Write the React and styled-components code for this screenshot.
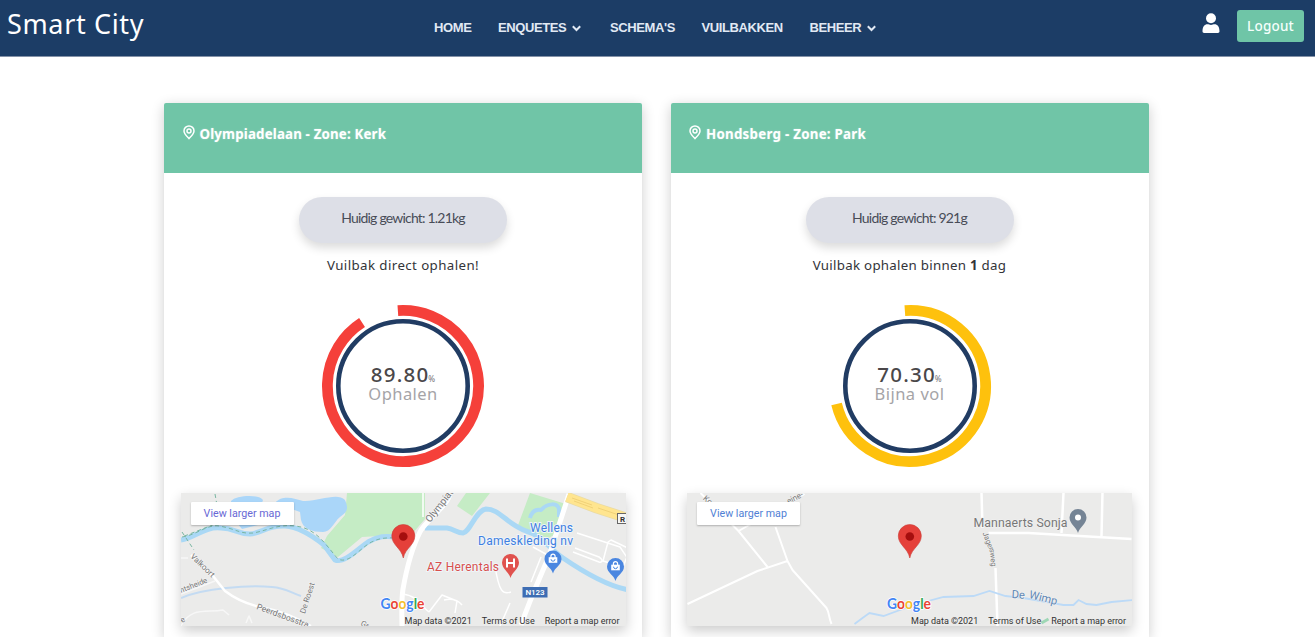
import React from 'react';
import styled, { createGlobalStyle } from 'styled-components';

const GlobalStyle = createGlobalStyle`
  * { box-sizing: border-box; }
  html, body { margin: 0; height: 637px; overflow: hidden; background: #fff; }
  body { font-family: "Noto Sans", "Open Sans", sans-serif; color: #3a3b40; }
`;

const Header = styled.header`
  height: 57px;
  display: grid;
  grid-template-columns: 434px 1fr auto;
  background: #1c3d66;
  border-bottom: 1px solid #8492a8;
  color: #fff;
`;

const Brand = styled.div`
  padding: 5px 0 0 7px;
  font-size: 27px;
  line-height: 37px;
  letter-spacing: 0.65px;
  white-space: nowrap;
`;

const Nav = styled.nav`
  display: flex;
  padding-top: 20px;
`;

const NavItem = styled.a`
  display: flex;
  align-items: center;
  height: 16px;
  width: ${(p) => p.$width}px;
  font: bold 13px/16px "Liberation Sans", Arial, sans-serif;
  letter-spacing: -0.4px;
  color: #e1e9f4;
  white-space: nowrap;
  svg { margin-left: 6px; flex: none; }
`;

const Account = styled.div`
  display: flex;
  align-items: flex-start;
  padding: 9.5px 11px 0 0;
  gap: 17px;
  > svg { margin-top: 2px; }
`;

const LogoutButton = styled.button`
  width: 67px;
  height: 32px;
  padding: 0;
  border: 0;
  border-radius: 3px;
  background: #6fc5a7;
  color: #f4fffb;
  font: 500 13.5px "Noto Sans", sans-serif;
  letter-spacing: 0.2px;
`;

const Main = styled.main`
  display: flex;
  gap: 28.5px;
  height: 580px;
  padding: 46px 0 0 164px;
  overflow: hidden;
`;

const Card = styled.article`
  width: 478px;
  height: 534px;
  flex: none;
  display: flex;
  flex-direction: column;
  align-items: center;
  border-radius: 2px 2px 0 0;
  background: #fff;
  box-shadow: 0 3px 13px rgba(0, 0, 0, 0.2);
`;

const CardHeader = styled.h2`
  align-self: stretch;
  display: flex;
  align-items: flex-start;
  gap: 5px;
  height: 70px;
  margin: 0;
  padding: 21px 0 0 18.5px;
  border-radius: 2px 2px 0 0;
  background: #70c5a7;
  color: #fff;
  font-size: 13.3px;
  font-weight: 700;
  line-height: 20px;
  letter-spacing: ${(p) => p.$spacing}px;
  text-shadow: 0 0 2px rgba(255, 255, 255, 0.35);
  svg { flex: none; margin-top: 1px; }
`;

const Weight = styled.div`
  width: 208px;
  height: 46px;
  margin-top: 24px;
  border-radius: 23px;
  background: #dddfe7;
  box-shadow: 0 5px 10px rgba(0, 0, 0, 0.14);
  text-align: center;
  font-family: Lato, "Noto Sans", sans-serif;
  font-size: 14px;
  line-height: 42px;
  letter-spacing: -0.8px;
  color: #484c57;
`;

const Advice = styled.p`
  margin: 12px 0 0;
  font-size: 13.3px;
  line-height: 20px;
  letter-spacing: ${(p) => p.$spacing}px;
  color: #333439;
`;

const Gauge = styled.div`
  display: grid;
  width: 164px;
  height: 164px;
  margin-top: 29px;
  > * { grid-area: 1 / 1; }
`;

const Reading = styled.div`
  display: flex;
  flex-direction: column;
  align-items: center;
  padding-top: 60px;
`;

const Percentage = styled.div`
  height: 20px;
  font-size: 20.5px;
  font-weight: 500;
  line-height: 20px;
  letter-spacing: 1.2px;
  color: #4a4749;
  small { font-size: 8px; letter-spacing: 0; color: #858388; margin-left: -1px; }
`;

const Status = styled.div`
  font-size: 16.5px;
  line-height: 20px;
  letter-spacing: ${(p) => p.$spacing}px;
  color: #a5a4a7;
`;

const MapFrame = styled.section`
  position: relative;
  width: 445px;
  height: 133px;
  margin-top: 25px;
  box-shadow: 0 5px 12px rgba(0, 0, 0, 0.2);
  font-family: Roboto, sans-serif;
  > svg { display: block; overflow: hidden; }
`;

const LargerMap = styled.a`
  position: absolute;
  top: 9px;
  left: 10px;
  width: 103px;
  height: 23px;
  border-radius: 1px;
  background: #fff;
  box-shadow: 0 1px 2px rgba(0, 0, 0, 0.25);
  color: ${(p) => p.$color};
  font-size: 10.7px;
  line-height: 23px;
  text-align: center;
`;

const Attribution = styled.footer`
  position: absolute;
  right: 6px;
  bottom: -1px;
  display: flex;
  gap: 10px;
  font-size: 9px;
  line-height: 11px;
  letter-spacing: -0.02px;
  color: #333;
  white-space: nowrap;
`;

const Chevron = () => (
  <svg width="9" height="7" viewBox="0 0 9 7" fill="none" stroke="#e1e9f4" strokeWidth="2">
    <path d="M.8 1.3 4.5 5 8.2 1.3" />
  </svg>
);

const UserIcon = () => (
  <svg width="19" height="22" viewBox="0 0 19 22" fill="#fff">
    <circle cx="10" cy="6.300" r="5" />
    <path d="M1.500 19.3c0-4.600 2.100-7 4.900-7 1.300 0 2.200.6 3.600.6s2.300-.6 3.600-.6c2.800 0 4.900 2.400 4.900 7 0 1-.6 1.600-1.600 1.600H3.100c-1 0-1.600-.6-1.600-1.600Z" />
  </svg>
);

const PinIcon = () => (
  <svg width="12" height="15" viewBox="0 0 12 15" fill="none" stroke="#fff">
    <path strokeWidth="1.500" d="M6 13.600C3.200 10.600 1 8.500 1 5.900a5 5 0 0 1 10 0c0 2.600-2.200 4.700-5 7.700Z" />
    <circle cx="6" cy="5.900" r="2" strokeWidth="1.500" />
  </svg>
);

const point = (deg, r) => {
  const a = (deg * Math.PI) / 180;
  return `${82 + r * Math.sin(a)} ${82 - r * Math.cos(a)}`;
};

const Ring = ({ color, end }) => (
  <svg width="164" height="164" viewBox="0 0 164 164" fill="none">
    <circle cx="82" cy="82" r="64.700" stroke="#213c63" strokeWidth="4.600" />
    <path d={`M${point(-3.9, 75.6)}A75.6 75.6 0 1 1 ${point(end, 75.6)}`} stroke={color} strokeWidth="10.800" />
  </svg>
);

const RedMarker = ({ x }) => (
  <g transform={`translate(${x} 558)`}>
    <path d="M0 0C-2-10-11.500-13-11.500-22a11.500 11.500 0 0 1 23 0C11.500-13 2-10 0 0Z" fill="#e5403a" stroke="#c9403a" strokeWidth=".6" />
    <circle cy="-21.500" r="4.300" fill="#a50e0e" />
  </g>
);

const ShopMarker = ({ x, y }) => (
  <g transform={`translate(${x} ${y})`}>
    <path d="M0 0C-1.500-6-8.500-8-8.500-14.500a8.500 8.500 0 0 1 17 0C8.500-8 1.500-6 0 0Z" fill="#4a86e0" />
    <path d="M-4.300-16.300h8.600v5.600h-8.600Z" fill="#fff" />
    <path d="M-2.100-15.500v-1.800a2.100 2.100 0 0 1 4.200 0v1.800" fill="none" stroke="#fff" strokeWidth="1.200" />
    <path d="M-2-14.300a2 2 0 0 0 4 0" fill="none" stroke="#4a86e0" strokeWidth="1" />
  </g>
);

const GoogleMark = ({ x }) => (
  <text x={x} y="608.500" fontFamily="Lato, sans-serif" fontSize="14.300" fontWeight="700" textLength="44" lengthAdjust="spacingAndGlyphs" stroke="#fff" strokeWidth="1.600" paintOrder="stroke">
    <tspan fill="#4285f4">G</tspan><tspan fill="#ea4335">o</tspan><tspan fill="#f5c02c">o</tspan><tspan fill="#4285f4">g</tspan><tspan fill="#34a853">l</tspan><tspan fill="#ea4335">e</tspan>
  </text>
);

const KerkMap = () => (
  <svg width="445" height="133" viewBox="181 493 445 133" fontFamily="Roboto, sans-serif">
    <path fill="#ebebea" d="M181 493h445v133H181z" />
    <g fill="#c5ecc5">
      <path d="M347 493h78v26l-13 15-15 1-35 2-24 20-17-9 6-12 18-21Z" />
      <path d="m466 493-9 13 15 10 18-23Z" />
      <path d="m530 493 36 11-9 29-13 8-27-13Z" />
    </g>
    <g fill="#aad6f9">
      <path d="M231 501c5-6 29-7 32-1l-4 12 3 12-20 5-9-11Z" />
      <path d="M275 503c8-9 20-4 28-2 15 1 34-9 42-1 4 9 2 12-5 17-7 6-9 15-17 15-11 0-20-3-22-12l-1-8Z" />
    </g>
    <g fill="none" stroke="#aad8f5" strokeLinejoin="round">
      <path strokeWidth="5" d="M181 540c14-2 24-14 40-12 14 0 16 6 29 6 12-1 18-9 35-8 15 1 29 11 39 19l11 15c9 4 24-12 33-18 15-9 24-4 35-5M425 528h22c7 1 10 5 16 5 7-1 13-23 23-24 14 0 19 14 40 22 17 5 20 15 37 27 19 13 43 28 66 32" />
      <path strokeWidth="4" d="M530 518c2-7 6-9 11-8 6-7 18-8 18 0v7" />
      <path stroke="#c4dbf2" strokeWidth="2" d="M181 598c23-10 67-13 91-11 14 1 19 6 29 9" />
    </g>
    <path fill="none" stroke="#79b6a2" strokeWidth="1" strokeDasharray="4 3" d="m215 494 5 28-38 15m0-5 12 18m-12-13c15-2 25-13 37-11 18 3 20 8 34 7 13-2 24-9 42-7 21 2 30 18 43 33 12 6 24-14 36-18 10-5 20-2 29-4" />
    <g fill="none" stroke="#fff" strokeLinejoin="round">
      <path strokeWidth="1.500" stroke="#f7f7f7" d="M181 558h7m-7 68c10-20 26-13 42-16l6 5m17 8 3-7 3 7" />
      <path strokeWidth="2.500" d="m191 555 22 21 12 15c13 10 27 15 44 18 15 3 29 10 42 17" />
      <path strokeWidth="1.500" stroke="#f7f7f7" d="m181 594 34-13" />
      <path strokeWidth="5" d="M450 493c-1 12-24 27-30 39-9 18-14 40-17 57-2 12-1 28-1 38m167-133-20 62c-11 26-18 41-28 69" />
      <path strokeWidth="1.500" d="M423 493v24m-20 77c15 2 19 13 26 18m0 0 13-17 15 6-2 12m-11-13c8-2 14 0 18 5m33-39c4 26 8 29 16 26m20-10 10-25m-8-10 20 11m-53 68 10-23m67-70 43 14 12 18m-57-17 24 9c5 3 3 6 0 5l-26-10m38-12 19 9-7 18-20-6 5-19Z" />
    </g>
    <g fill="none">
      <path stroke="#eadba4" strokeWidth="10.500" d="m567 497 29 11 31 10" />
      <path stroke="#ffe58f" strokeWidth="9" d="m567 497 29 11 31 10" />
      <path stroke="#eccb71" strokeWidth=".8" d="m572 498 20 7m-18-4 19 7m5 0 27 9" />
    </g>
    <g fill="#777" fontSize="8" stroke="#f5f5f5" strokeWidth="1.200" paintOrder="stroke">
      <text transform="translate(190 557) rotate(44)">Valkoort</text>
      <text transform="translate(181 593) rotate(-22)" fontSize="7.600">ntsheide</text>
      <text transform="translate(305 614) rotate(-72)">De Roest</text>
      <text transform="translate(256 609) rotate(20)" fontSize="8.500">Peerdsbosstra</text>
      <text transform="translate(360 625) rotate(28)">Gr</text>
      <text transform="translate(430 523) rotate(-52)" fontSize="9.800">Olympiadelaan</text>
      <text transform="translate(182 623) rotate(-30)">e</text>
    </g>
    <g fill="#3f7fe0" fontSize="12" stroke="#f0f5fa" strokeWidth="1.800" paintOrder="stroke">
      <text x="530" y="532" textLength="43">Wellens</text>
      <text x="478" y="545" textLength="95">Dameskleding nv</text>
      <text x="427" y="571" fill="#d8504d" textLength="72">AZ Herentals</text>
    </g>
    <path transform="translate(510.500 578)" d="M0 0C-1.500-6-8.500-9-8.500-15.500a8.500 8.500 0 0 1 17 0C8.500-9 1.500-6 0 0Z" fill="#e0524e" />
    <path d="M507 558.500v9m7-9v9m-7-4.500h7" stroke="#fff" strokeWidth="2" />
    <ShopMarker x={553} y={573.5} />
    <ShopMarker x={615.5} y={581} />
    <rect x="522.500" y="587" width="25" height="10.500" fill="#3d6db3" />
    <text x="525.500" y="595.300" fill="#fff" fontSize="8" fontWeight="600" textLength="19">N123</text>
    <rect x="617.500" y="513.500" width="12" height="10" fill="#f7f7f5" stroke="#666" />
    <text x="620" y="521.500" fill="#333" fontSize="8" fontWeight="700">R</text>
    <RedMarker x={403.3} />
    <GoogleMark x={380.5} />
  </svg>
);

const ParkMap = () => (
  <svg width="445" height="133" viewBox="687.5 493 445 133" fontFamily="Roboto, sans-serif">
    <path fill="#ebebea" d="M687 493h446v133H687z" />
    <g fill="none" stroke="#fff" strokeWidth="2" strokeLinejoin="round">
      <path d="m688 604 70-33 30-10 5 9 34 38c3 5 2 9 5 16M768 567l-29-36-38-38m38 38 66-37m-29 33 12 34" />
      <path d="m982 493 1 35m6 5h40l103 6M996 568l2 58m64-93 2-40m38 43 1-43" strokeWidth="2.500" />
    </g>
    <path fill="none" stroke="#bcdaf7" strokeWidth="1.800" d="m855 624 8-6 7-5 14 3 30-11 30-8 30-1 16-5 16 5 18 2 40 7h10l5-5 8 4 10 1 15-3 22-2" />
    <path stroke="#9ed7b5" strokeWidth="3" d="m1042 623 7-4" />
    <g fill="#777" fontSize="8" stroke="#f2f2f2" strokeWidth="1" paintOrder="stroke">
      <text transform="translate(703 499) rotate(42)">Kor</text>
      <text transform="translate(789 504) rotate(-27)">eine-</text>
      <text transform="translate(983 533) rotate(69)" fontSize="7.500">Jager</text>
      <text transform="translate(990 549) rotate(84)" fontSize="7.500">sweg</text>
      <text x="974" y="526.500" fontSize="12.300" textLength="94">Mannaerts Sonja</text>
      <text transform="translate(1012 598) rotate(3)" fill="#6088b5" fontSize="11.200">De</text>
      <text transform="translate(1029 598) rotate(14)" fill="#6088b5" fontSize="11.200">Wimp</text>
    </g>
    <path transform="translate(1078.500 533)" d="M0 0C-1.500-6-8.500-9-8.500-15.500a8.500 8.500 0 0 1 17 0C8.500-9 1.500-6 0 0Z" fill="#758495" />
    <circle cx="1078.500" cy="517.500" r="3" fill="#fff" />
    <RedMarker x={910.3} />
    <GoogleMark x={887.5} />
  </svg>
);

const bins = [
  { title: 'Olympiadelaan - Zone: Kerk', titleSpacing: 0.17, weight: '1.21kg', advice: <>Vuilbak direct ophalen!</>, adviceSpacing: 0.41, percent: '89.80', status: 'Ophalen', statusSpacing: 0.45, color: '#f5403a', end: 327.2, Map: KerkMap, link: '#6868d5' },
  { title: 'Hondsberg - Zone: Park', titleSpacing: 0.27, weight: '921g', advice: <>Vuilbak ophalen binnen <b>1</b> dag</>, adviceSpacing: 0.28, percent: '70.30', status: 'Bijna vol', statusSpacing: 0.5, color: '#fec10d', end: 256.3, Map: ParkMap, link: '#517fd5' },
];

const BinCard = ({ bin }) => (
  <Card>
    <CardHeader $spacing={bin.titleSpacing}><PinIcon />{bin.title}</CardHeader>
    <Weight>Huidig gewicht: {bin.weight}</Weight>
    <Advice $spacing={bin.adviceSpacing}>{bin.advice}</Advice>
    <Gauge>
      <Ring color={bin.color} end={bin.end} />
      <Reading>
        <Percentage>{bin.percent}<small>%</small></Percentage>
        <Status $spacing={bin.statusSpacing}>{bin.status}</Status>
      </Reading>
    </Gauge>
    <MapFrame>
      <bin.Map />
      <LargerMap $color={bin.link}>View larger map</LargerMap>
      <Attribution><span>Map data ©2021</span><span>Terms of Use</span><span>Report a map error</span></Attribution>
    </MapFrame>
  </Card>
);

export default function App() {
  return (
    <>
      <GlobalStyle />
      <Header>
        <Brand>Smart City</Brand>
        <Nav>
          <NavItem $width={64}>HOME</NavItem>
          <NavItem $width={112}>ENQUETES<Chevron /></NavItem>
          <NavItem $width={91.5}>SCHEMA'S</NavItem>
          <NavItem $width={108}>VUILBAKKEN</NavItem>
          <NavItem $width={70}>BEHEER<Chevron /></NavItem>
        </Nav>
        <Account>
          <UserIcon />
          <LogoutButton>Logout</LogoutButton>
        </Account>
      </Header>
      <Main>{bins.map((bin) => <BinCard key={bin.title} bin={bin} />)}</Main>
    </>
  );
}
